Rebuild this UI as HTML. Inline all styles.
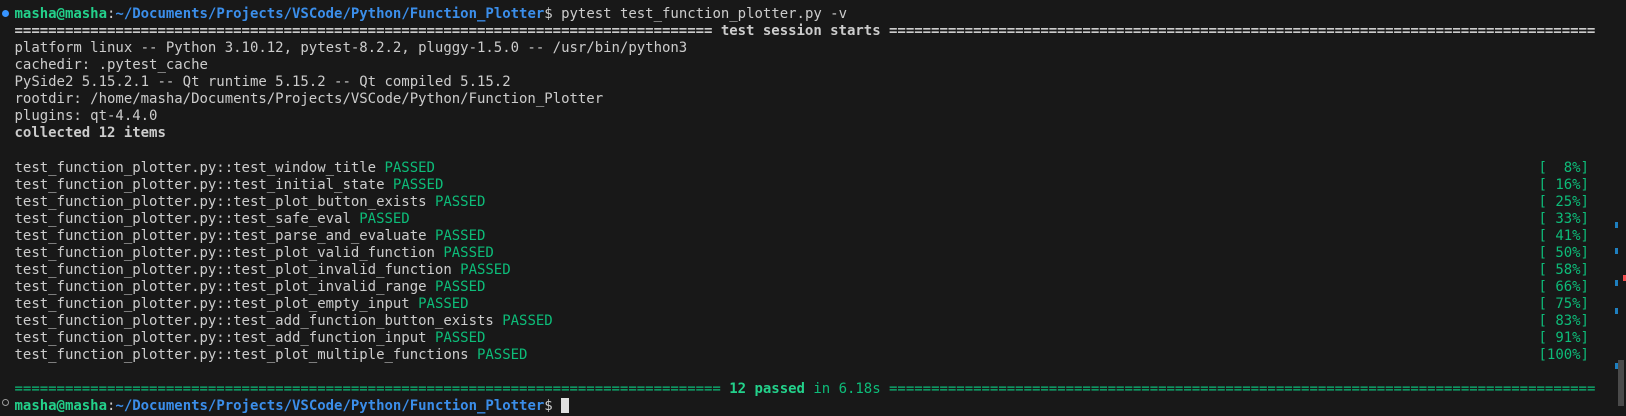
<!DOCTYPE html>
<html><head><meta charset="utf-8"><style>
html,body{margin:0;padding:0;background:#181818;width:1626px;height:406px;overflow:hidden}
.t{position:absolute;left:14.5px;top:6px;font-family:"DejaVu Sans Mono","Liberation Mono",monospace;font-size:14px;line-height:17.07px;color:#cccccc;letter-spacing:-0.02px}
.r{height:17.07px;position:relative;white-space:pre}
.g{color:#0dbc79}.gb{color:#23d18b;font-weight:bold}.b{color:#3b8eea;font-weight:bold}.w{font-weight:bold}
.p{position:absolute;left:1524px;top:0;color:#0dbc79}
.dot{position:absolute;left:2px;top:10px;width:7px;height:7px;border-radius:50%;background:#3794ff}
.dot2{position:absolute;left:1.5px;top:399px;width:5px;height:5px;border-radius:50%;border:1px solid #9a9a9a}
.cur{display:inline-block;width:8px;height:15px;background:#e0e0e0;vertical-align:-3px}
.m{position:absolute;width:3px;height:6px;background:#1e7fbf;left:1615px}
</style></head><body>
<div class="dot"></div><div class="dot2"></div>
<div class="t"><div class="r"><span class="gb">masha@masha</span>:<span class="b">~/Documents/Projects/VSCode/Python/Function_Plotter</span>$ pytest test_function_plotter.py -v</div><div class="r"><span class="w">=================================================================================== test session starts ====================================================================================</span></div><div class="r">platform linux -- Python 3.10.12, pytest-8.2.2, pluggy-1.5.0 -- /usr/bin/python3</div><div class="r">cachedir: .pytest_cache</div><div class="r">PySide2 5.15.2.1 -- Qt runtime 5.15.2 -- Qt compiled 5.15.2</div><div class="r">rootdir: /home/masha/Documents/Projects/VSCode/Python/Function_Plotter</div><div class="r">plugins: qt-4.4.0</div><div class="r"><span class="w">collected 12 items</span></div><div class="r"> </div><div class="r">test_function_plotter.py::test_window_title <span class="g">PASSED</span><span class="p">[  8%]</span></div><div class="r">test_function_plotter.py::test_initial_state <span class="g">PASSED</span><span class="p">[ 16%]</span></div><div class="r">test_function_plotter.py::test_plot_button_exists <span class="g">PASSED</span><span class="p">[ 25%]</span></div><div class="r">test_function_plotter.py::test_safe_eval <span class="g">PASSED</span><span class="p">[ 33%]</span></div><div class="r">test_function_plotter.py::test_parse_and_evaluate <span class="g">PASSED</span><span class="p">[ 41%]</span></div><div class="r">test_function_plotter.py::test_plot_valid_function <span class="g">PASSED</span><span class="p">[ 50%]</span></div><div class="r">test_function_plotter.py::test_plot_invalid_function <span class="g">PASSED</span><span class="p">[ 58%]</span></div><div class="r">test_function_plotter.py::test_plot_invalid_range <span class="g">PASSED</span><span class="p">[ 66%]</span></div><div class="r">test_function_plotter.py::test_plot_empty_input <span class="g">PASSED</span><span class="p">[ 75%]</span></div><div class="r">test_function_plotter.py::test_add_function_button_exists <span class="g">PASSED</span><span class="p">[ 83%]</span></div><div class="r">test_function_plotter.py::test_add_function_input <span class="g">PASSED</span><span class="p">[ 91%]</span></div><div class="r">test_function_plotter.py::test_plot_multiple_functions <span class="g">PASSED</span><span class="p">[100%]</span></div><div class="r"> </div><div class="r"><span class="g">====================================================================================</span><span class="gb"> 12 passed</span><span class="g"> in 6.18s ====================================================================================</span></div><div class="r"><span class="gb">masha@masha</span>:<span class="b">~/Documents/Projects/VSCode/Python/Function_Plotter</span>$ <span class="cur"></span></div></div>
<div class="m" style="top:222px"></div>
<div class="m" style="top:248px"></div>
<div class="m" style="top:280px"></div>
<div class="m" style="top:308px"></div>
<div class="m" style="top:363px"></div>
<div style="position:absolute;left:1623px;top:275px;width:3px;height:6px;background:#f14c4c"></div>
<div style="position:absolute;left:1618px;top:360px;width:6px;height:46px;background:#4a4a4a"></div>
</body></html>
